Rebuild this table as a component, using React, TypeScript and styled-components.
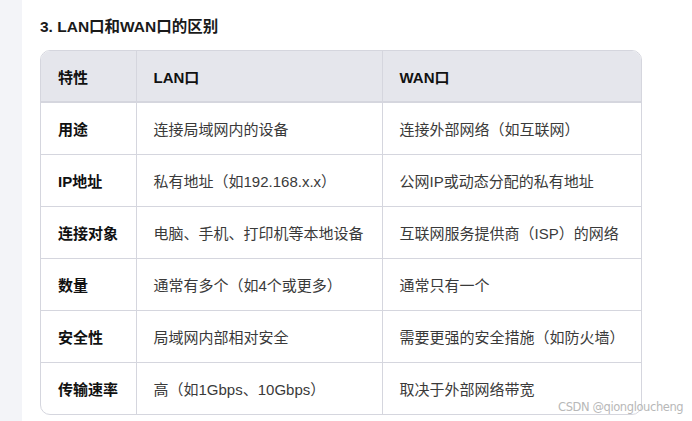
import { FC } from "react";
import styled, { createGlobalStyle } from "styled-components";

const GlobalStyle = createGlobalStyle`
  html, body {
    margin: 0;
    padding: 0;
    background: #ffffff;
  }
  body {
    font-family: "Liberation Sans", Arial, "Noto Sans CJK SC", sans-serif;
    color: #333;
  }
`;

const rows: [string, string, string][] = [
  ["用途", "连接局域网内的设备", "连接外部网络（如互联网）"],
  ["IP地址", "私有地址（如192.168.x.x）", "公网IP或动态分配的私有地址"],
  ["连接对象", "电脑、手机、打印机等本地设备", "互联网服务提供商（ISP）的网络"],
  ["数量", "通常有多个（如4个或更多）", "通常只有一个"],
  ["安全性", "局域网内部相对安全", "需要更强的安全措施（如防火墙）"],
  ["传输速率", "高（如1Gbps、10Gbps）", "取决于外部网络带宽"],
];

const App: FC = () => {
  return (
    <Page>
      <GlobalStyle />
      <SideStrip />
      <Content>
        <Title>3. LAN口和WAN口的区别</Title>
        <TableWrap>
          <Table>
            <colgroup>
              <col style={{ width: 95 }} />
              <col style={{ width: 246 }} />
              <col />
            </colgroup>
            <thead>
              <tr>
                <Th>特性</Th>
                <Th>LAN口</Th>
                <Th>WAN口</Th>
              </tr>
            </thead>
            <tbody>
              {rows.map(([k, lan, wan]) => (
                <tr key={k}>
                  <Td $bold>{k}</Td>
                  <Td>{lan}</Td>
                  <Td>{wan}</Td>
                </tr>
              ))}
            </tbody>
          </Table>
        </TableWrap>
      </Content>
      <Watermark>CSDN @qiongloucheng</Watermark>
    </Page>
  );
};

export default App;

const Page = styled.div`
  position: relative;
  display: flex;
  width: 692px;
  height: 421px;
  overflow: hidden;
  background: #fff;
`;

const SideStrip = styled.div`
  width: 22px;
  flex-shrink: 0;
  background: #f3f4f8;
`;

const Content = styled.div`
  padding: 0 0 0 18px;
  width: 602px;
`;

const Title = styled.h3`
  margin: 0;
  height: 50px;
  display: flex;
  align-items: center;
  padding-bottom: 1px;
  box-sizing: border-box;
  font-size: 15.5px;
  font-weight: 700;
  color: #1a1a1a;
  font-family: "Liberation Sans", Arial, "Noto Sans CJK SC", sans-serif;
`;

const TableWrap = styled.div`
  border: 1px solid #d5d6de;
  border-radius: 10px;
  overflow: hidden;
`;

const Table = styled.table`
  width: 100%;
  border-collapse: collapse;
  table-layout: fixed;
  font-size: 15px;

  thead tr {
    background: #e5e6ec;
  }
  tbody tr:last-child td {
    border-bottom: none;
  }
  tr > *:last-child {
    border-right: none;
  }
`;

const Th = styled.th`
  height: 50px;
  padding: 0 17px;
  text-align: left;
  font-weight: 700;
  color: #111;
  border-right: 1px solid #d5d6de;
  border-bottom: 2px solid #d5d6de;
`;

const Td = styled.td<{ $bold?: boolean }>`
  height: 51px;
  padding: 0 17px;
  color: ${(p) => (p.$bold ? "#111" : "#3a3a3a")};
  font-weight: ${(p) => (p.$bold ? 700 : 400)};
  border-right: 1px solid #d5d6de;
  border-bottom: 1px solid #d5d6de;
  white-space: nowrap;
`;

const Watermark = styled.div`
  position: absolute;
  left: 558px;
  top: 400px;
  font-size: 11.5px;
  color: #b8b8b8;
  font-family: "DejaVu Sans", sans-serif;
  letter-spacing: -0.4px;
`;
